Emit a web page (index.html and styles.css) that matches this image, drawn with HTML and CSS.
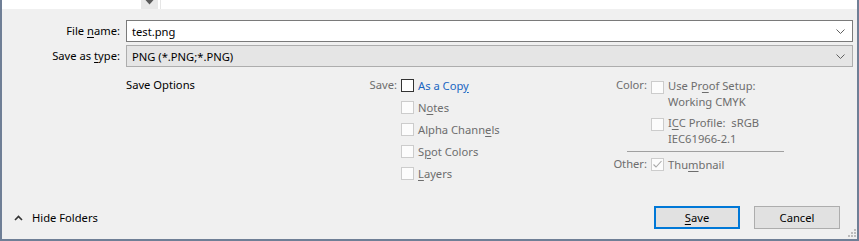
FILE: index.html
```html
<!DOCTYPE html>
<html>
<head>
    <title>Save As</title>
    <link rel="stylesheet" href="styles.css">
</head>
<body>
    <div class="window">
        <!-- bottom edge of the folder pane -->
        <div class="top-strip">
            <div class="strip-pane"></div>
            <div class="strip-toggle">
                <svg width="9" height="6" viewBox="0 0 9 6"><path d="M0.5 0 L4.5 4.5 L8.5 0 Z" fill="#5a5a5a"/></svg>
            </div>
            <div class="strip-divider"></div>
            <div class="strip-rest"></div>
        </div>

        <div class="dialog">
            <div class="fields">
                <label class="field-label">File <u>n</u>ame:</label>
                <div class="combo editable">
                    <span class="combo-text">test.png</span>
                    <svg class="combo-arrow" width="9" height="5" viewBox="0 0 9 5"><path d="M0.5 0.5 L4.5 4.5 L8.5 0.5" fill="none" stroke="#606060" stroke-width="1"/></svg>
                </div>
                <label class="field-label">Save as <u>t</u>ype:</label>
                <div class="combo select">
                    <span class="combo-text">PNG (*.PNG;*.PNG)</span>
                    <svg class="combo-arrow" width="9" height="5" viewBox="0 0 9 5"><path d="M0.5 0.5 L4.5 4.5 L8.5 0.5" fill="none" stroke="#606060" stroke-width="1"/></svg>
                </div>
            </div>

            <div class="options">
                <div class="options-title">Save Options</div>

                <div class="opt-group save-group">
                    <span class="opt-label">Save:</span>
                    <div class="opt-list">
                        <div class="check-row"><span class="box"></span><span class="check-text link">As a Cop<u>y</u></span></div>
                        <div class="check-row disabled"><span class="box"></span><span class="check-text">N<u>o</u>tes</span></div>
                        <div class="check-row disabled"><span class="box"></span><span class="check-text">Alpha Chann<u>e</u>ls</span></div>
                        <div class="check-row disabled"><span class="box"></span><span class="check-text">S<u>p</u>ot Colors</span></div>
                        <div class="check-row disabled"><span class="box"></span><span class="check-text"><u>L</u>ayers</span></div>
                    </div>
                </div>

                <div class="opt-group color-group">
                    <span class="opt-label">Color:</span>
                    <div class="opt-list color-list">
                        <div class="check-row tall disabled"><span class="box"></span><span class="check-text">Use Pr<u>o</u>of Setup:<br>Working CMYK</span></div>
                        <div class="check-row tall disabled"><span class="box"></span><span class="check-text">I<u>C</u>C Profile:&nbsp; sRGB<br>IEC61966-2.1</span></div>
                    </div>
                    <div class="separator"></div>
                    <span class="opt-label">Other:</span>
                    <div class="opt-list">
                        <div class="check-row disabled">
                            <span class="box">
                                <svg width="11" height="11" viewBox="0 0 11 11"><path d="M1.5 5.5 L4 8 L9.5 2" fill="none" stroke="#a8a8a8" stroke-width="1.1"/></svg>
                            </span>
                            <span class="check-text">Thu<u>m</u>bnail</span>
                        </div>
                    </div>
                </div>
            </div>

            <div class="footer">
                <div class="hide-folders">
                    <svg width="9" height="6" viewBox="0 0 9 6"><path d="M1 5 L4.5 1.5 L8 5" fill="none" stroke="#333" stroke-width="1.6"/></svg>
                    <span>Hide Folders</span>
                </div>
                <div class="buttons">
                    <button class="btn primary"><u>S</u>ave</button>
                    <button class="btn">Cancel</button>
                </div>
            </div>

            <svg class="grip" width="8" height="8" viewBox="0 0 8 8">
                <rect x="6" y="0" width="2" height="2" fill="#bcbcbc"/>
                <rect x="3" y="3" width="2" height="2" fill="#bcbcbc"/>
                <rect x="6" y="3" width="2" height="2" fill="#bcbcbc"/>
                <rect x="0" y="6" width="2" height="2" fill="#bcbcbc"/>
                <rect x="3" y="6" width="2" height="2" fill="#bcbcbc"/>
                <rect x="6" y="6" width="2" height="2" fill="#bcbcbc"/>
            </svg>
        </div>
    </div>
</body>
</html>
```

FILE: styles.css
```css
body {
    margin: 0;
    background-color: #ffffff;
    font-family: "Noto Sans", "Open Sans", sans-serif;
    font-size: 11.2px;
    color: #000000;
}
u {
    text-underline-offset: 2px;
    text-decoration-thickness: 1px;
}
.window {
    width: 859px;
    height: 241px;
    box-sizing: border-box;
    border-left: 2px solid #6f7f96;
    border-right: 2px solid #6f7f96;
    border-bottom: 2px solid #6f7f96;
    display: flex;
    flex-direction: column;
}
.top-strip {
    height: 9px;
    display: flex;
    background-color: #ffffff;
}
.strip-pane {
    width: 139px;
}
.strip-toggle {
    width: 17px;
    background-color: #e8e8e8;
    display: flex;
    justify-content: center;
}
.strip-divider {
    width: 1px;
    margin-left: 2px;
    background-color: #e6e6e6;
}
.strip-rest {
    flex: 1;
}
.dialog {
    position: relative;
    flex: 1;
    background-color: #f0f0f0;
    display: flex;
    flex-direction: column;
    padding-top: 11px;
}
.fields {
    display: grid;
    grid-template-columns: 118px 727px;
    column-gap: 6px;
    row-gap: 3px;
}
.field-label {
    text-align: right;
    line-height: 22px;
}
.combo {
    height: 22px;
    box-sizing: border-box;
    display: flex;
    align-items: center;
    padding: 0 7px 0 5px;
}
.combo.editable {
    background-color: #ffffff;
    border: 1px solid #7a7a7a;
}
.combo.select {
    background-color: #e5e5e5;
    border: 1px solid #adadad;
}
.combo-text {
    flex: 1;
}
.options {
    display: flex;
    padding-left: 124px;
    margin-top: 7px;
}
.options-title {
    width: 220px;
    line-height: 22px;
}
.opt-group {
    display: grid;
    column-gap: 4px;
    align-content: start;
}
.save-group {
    width: 260px;
    grid-template-columns: 51px auto;
}
.color-group {
    grid-template-columns: 41px auto;
}
.opt-label {
    text-align: right;
    color: #6d6d6d;
    line-height: 22px;
}
.check-row {
    display: flex;
    align-items: center;
    gap: 4px;
    height: 22px;
}
.check-row.tall {
    height: auto;
    align-items: flex-start;
    padding-top: 4px;
    line-height: 16px;
}
.color-list {
    display: flex;
    flex-direction: column;
    gap: 1px;
}
.check-row.tall .box {
    margin-top: 3px;
}
.box {
    width: 13px;
    height: 13px;
    box-sizing: border-box;
    border: 1px solid #333333;
    background-color: #ffffff;
    display: flex;
    align-items: center;
    justify-content: center;
    flex-shrink: 0;
}
.disabled .box {
    border-color: #cccccc;
    background-color: #fcfcfc;
}
.disabled .check-text {
    color: #6d6d6d;
}
.link {
    color: #1a66c2;
}
.separator {
    grid-column: 1 / -1;
    margin: 4px 0 1px 21px;
    width: 157px;
    height: 1px;
    background-color: #a0a0a0;
}
.footer {
    margin-top: auto;
    display: flex;
    align-items: center;
    justify-content: space-between;
    padding: 0 17px 10px 12px;
}
.hide-folders {
    display: flex;
    align-items: center;
    gap: 9px;
}
.buttons {
    display: flex;
    gap: 14px;
}
.btn {
    width: 86px;
    height: 23px;
    box-sizing: border-box;
    font-family: inherit;
    font-size: 11.2px;
    color: #000000;
    background-color: #e1e1e1;
    border: 1px solid #adadad;
    padding: 0;
}
.btn.primary {
    border: 2px solid #0078d7;
}
.grip {
    position: absolute;
    right: 1px;
    bottom: 2px;
}
```
